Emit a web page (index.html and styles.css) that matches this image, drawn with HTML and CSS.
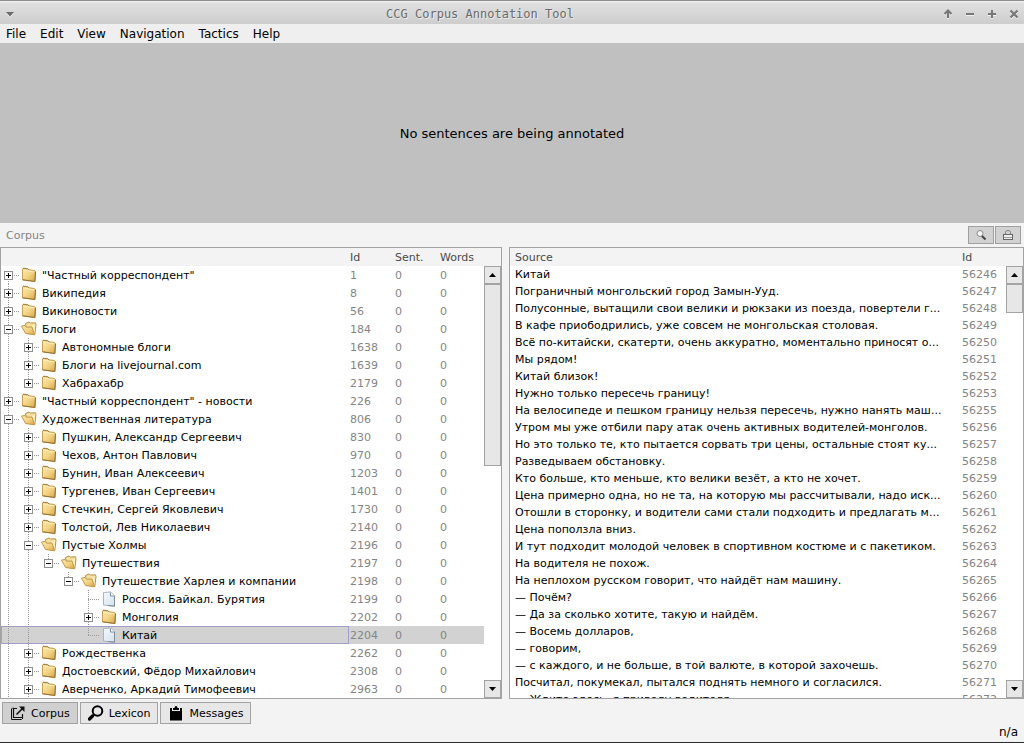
FILE: index.html
```html
<!DOCTYPE html>
<html lang="ru">
<head>
<meta charset="utf-8">
<title>CCG Corpus Annotation Tool</title>
<link rel="stylesheet" href="styles.css">
</head>
<body>
<svg class="sprites" aria-hidden="true">
  <defs>
    <linearGradient id="gold" x1="0" y1="0" x2="1" y2="1"><stop offset="0" stop-color="#fdeab0"/><stop offset="0.5" stop-color="#f3d486"/><stop offset="1" stop-color="#d9a545"/></linearGradient>
    <linearGradient id="paper" x1="0" y1="0" x2="1" y2="1"><stop offset="0" stop-color="#f4f9fd"/><stop offset="1" stop-color="#d3e2f0"/></linearGradient>
    <symbol id="folder" viewBox="0 0 16 16">
      <path d="M1.500 2 L2.500 1.200 L6.500 1.500 L8 2.800 L13.500 3.500 L14.500 4.500 L14 14.500 L1.500 12.800Z" fill="url(#gold)" stroke="#c9a052"/>
      <path d="M2.500 3 L7 3.500 L8 4.300 L13 4.800" fill="none" stroke="#fdf0c4"/>
      <path d="M1.500 12.800 L13.800 14.500 L14.500 4.800" fill="none" stroke="#93702f"/>
      <path d="M2 1.500 L6.500 1.800 L8 2.800" fill="none" stroke="#a5803c"/>
    </symbol>
    <symbol id="folder-open" viewBox="0 0 16 16">
      <path d="M4.500 2.500 L8 1 L9.500 2 L14.500 1.800 L15 3.500 L13.800 13.500 L6 12Z" fill="#f6df9c" stroke="#b8914a"/>
      <path d="M10.500 5 L14 3.500 L13.500 12" fill="#fbeebd" stroke="none"/>
      <path d="M0.500 5 L4 4.500 L5.500 6.200 L11 6 L13.500 13.800 L4.500 12.500Z" fill="url(#gold)" stroke="#c29a4d"/>
    </symbol>
    <symbol id="page" viewBox="0 0 16 16">
      <path d="M2.500 1.500 L9.500 1 L13.500 4.500 V15.200 L2.500 14Z" fill="url(#paper)" stroke="#a9b4bf"/>
      <path d="M9.500 1.500 V5 H13.500" fill="#ffffff" stroke="#7f8f9f"/>
      <path d="M13.500 5 V15.200 L7 14.500" fill="none" stroke="#7f8c99"/>
    </symbol>
  </defs>
</svg>

<header class="titlebar">
  <button class="wm" aria-label="Window menu"><svg width="10" height="7" viewBox="0 0 10 7"><path d="M1 1 H9 L5 5.500Z" fill="#6b6b6b"/></svg></button>
  <h1 class="title">CCG Corpus Annotation Tool</h1>
  <div class="wm-group">
    <button class="wm" aria-label="Shade"><svg width="10" height="10" viewBox="0 0 10 10"><path d="M5 9 V2 M1.500 5 L5 1.500 L8.500 5" fill="none" stroke="#777" stroke-width="2"/></svg></button>
    <button class="wm" aria-label="Minimize"><svg width="10" height="10" viewBox="0 0 10 10"><path d="M1 5 H9" stroke="#777" stroke-width="2"/></svg></button>
    <button class="wm" aria-label="Maximize"><svg width="10" height="10" viewBox="0 0 10 10"><path d="M1 5 H9 M5 1 V9" stroke="#777" stroke-width="2"/></svg></button>
    <button class="wm" aria-label="Close"><svg width="10" height="10" viewBox="0 0 10 10"><path d="M1.500 1.500 L8.500 8.500 M8.500 1.500 L1.500 8.500" stroke="#777" stroke-width="2.200"/></svg></button>
  </div>
</header>

<nav class="menubar">
  <button>File</button><button>Edit</button><button>View</button><button>Navigation</button><button>Tactics</button><button>Help</button>
</nav>

<section class="stage"><p>No sentences are being annotated</p></section>

<div class="dock-head">
  <h2>Corpus</h2>
  <div class="dock-tools">
    <button aria-label="Search"><svg width="12" height="12" viewBox="0 0 12 12"><circle cx="5" cy="4.500" r="3" fill="#f6f6f6" stroke="#888"/><path d="M7 7 L10.500 10.500" stroke="#444" stroke-width="2"/></svg></button>
    <button aria-label="Lock"><svg width="12" height="12" viewBox="0 0 12 12"><path d="M3.500 6 V3 Q3.500 1.500 6 1.500 T8.500 3 V6" fill="none" stroke="#888"/><rect x="1.500" y="5.500" width="9" height="5" fill="#eee" stroke="#666"/><path d="M2 8.500 H10" stroke="#999"/></svg></button>
  </div>
</div>

<main class="panels">
  <section class="panel tree-panel">
    <div class="view">
      <table class="tree">
        <colgroup><col><col class="c-id"><col class="c-id"><col class="c-words"></colgroup>
        <thead><tr><th></th><th>Id</th><th>Sent.</th><th>Words</th></tr></thead>
        <tbody>
          <tr><td><div class="item"><span class="node first"><button class="plus" aria-label="Expand"></button></span><svg><use href="#folder"/></svg>"Частный корреспондент"</div></td><td>1</td><td>0</td><td>0</td></tr>
          <tr><td><div class="item"><span class="node"><button class="plus" aria-label="Expand"></button></span><svg><use href="#folder"/></svg>Википедия</div></td><td>8</td><td>0</td><td>0</td></tr>
          <tr><td><div class="item"><span class="node"><button class="plus" aria-label="Expand"></button></span><svg><use href="#folder"/></svg>Викиновости</div></td><td>56</td><td>0</td><td>0</td></tr>
          <tr><td><div class="item"><span class="node"><button class="minus" aria-label="Collapse"></button></span><svg><use href="#folder-open"/></svg>Блоги</div></td><td>184</td><td>0</td><td>0</td></tr>
          <tr><td><div class="item"><i class="line"></i><span class="node"><button class="plus" aria-label="Expand"></button></span><svg><use href="#folder"/></svg>Автономные блоги</div></td><td>1638</td><td>0</td><td>0</td></tr>
          <tr><td><div class="item"><i class="line"></i><span class="node"><button class="plus" aria-label="Expand"></button></span><svg><use href="#folder"/></svg>Блоги на livejournal.com</div></td><td>1639</td><td>0</td><td>0</td></tr>
          <tr><td><div class="item"><i class="line"></i><span class="node last"><button class="plus" aria-label="Expand"></button></span><svg><use href="#folder"/></svg>Хабрахабр</div></td><td>2179</td><td>0</td><td>0</td></tr>
          <tr><td><div class="item"><span class="node"><button class="plus" aria-label="Expand"></button></span><svg><use href="#folder"/></svg>"Частный корреспондент" - новости</div></td><td>226</td><td>0</td><td>0</td></tr>
          <tr><td><div class="item"><span class="node"><button class="minus" aria-label="Collapse"></button></span><svg><use href="#folder-open"/></svg>Художественная литература</div></td><td>806</td><td>0</td><td>0</td></tr>
          <tr><td><div class="item"><i class="line"></i><span class="node"><button class="plus" aria-label="Expand"></button></span><svg><use href="#folder"/></svg>Пушкин, Александр Сергеевич</div></td><td>830</td><td>0</td><td>0</td></tr>
          <tr><td><div class="item"><i class="line"></i><span class="node"><button class="plus" aria-label="Expand"></button></span><svg><use href="#folder"/></svg>Чехов, Антон Павлович</div></td><td>970</td><td>0</td><td>0</td></tr>
          <tr><td><div class="item"><i class="line"></i><span class="node"><button class="plus" aria-label="Expand"></button></span><svg><use href="#folder"/></svg>Бунин, Иван Алексеевич</div></td><td>1203</td><td>0</td><td>0</td></tr>
          <tr><td><div class="item"><i class="line"></i><span class="node"><button class="plus" aria-label="Expand"></button></span><svg><use href="#folder"/></svg>Тургенев, Иван Сергеевич</div></td><td>1401</td><td>0</td><td>0</td></tr>
          <tr><td><div class="item"><i class="line"></i><span class="node"><button class="plus" aria-label="Expand"></button></span><svg><use href="#folder"/></svg>Стечкин, Сергей Яковлевич</div></td><td>1730</td><td>0</td><td>0</td></tr>
          <tr><td><div class="item"><i class="line"></i><span class="node"><button class="plus" aria-label="Expand"></button></span><svg><use href="#folder"/></svg>Толстой, Лев Николаевич</div></td><td>2140</td><td>0</td><td>0</td></tr>
          <tr><td><div class="item"><i class="line"></i><span class="node"><button class="minus" aria-label="Collapse"></button></span><svg><use href="#folder-open"/></svg>Пустые Холмы</div></td><td>2196</td><td>0</td><td>0</td></tr>
          <tr><td><div class="item"><i class="line"></i><i class="line"></i><span class="node last"><button class="minus" aria-label="Collapse"></button></span><svg><use href="#folder-open"/></svg>Путешествия</div></td><td>2197</td><td>0</td><td>0</td></tr>
          <tr><td><div class="item"><i class="line"></i><i class="line"></i><i class="gap"></i><span class="node last"><button class="minus" aria-label="Collapse"></button></span><svg><use href="#folder-open"/></svg>Путешествие Харлея и компании</div></td><td>2198</td><td>0</td><td>0</td></tr>
          <tr><td><div class="item"><i class="line"></i><i class="line"></i><i class="gap"></i><i class="gap"></i><span class="node"></span><svg><use href="#page"/></svg>Россия. Байкал. Бурятия</div></td><td>2199</td><td>0</td><td>0</td></tr>
          <tr><td><div class="item"><i class="line"></i><i class="line"></i><i class="gap"></i><i class="gap"></i><span class="node"><button class="plus" aria-label="Expand"></button></span><svg><use href="#folder"/></svg>Монголия</div></td><td>2202</td><td>0</td><td>0</td></tr>
          <tr class="selected"><td><div class="item"><i class="line"></i><i class="line"></i><i class="gap"></i><i class="gap"></i><span class="node last"></span><svg><use href="#page"/></svg>Китай</div></td><td>2204</td><td>0</td><td>0</td></tr>
          <tr><td><div class="item"><i class="line"></i><span class="node"><button class="plus" aria-label="Expand"></button></span><svg><use href="#folder"/></svg>Рождественка</div></td><td>2262</td><td>0</td><td>0</td></tr>
          <tr><td><div class="item"><i class="line"></i><span class="node"><button class="plus" aria-label="Expand"></button></span><svg><use href="#folder"/></svg>Достоевский, Фёдор Михайлович</div></td><td>2308</td><td>0</td><td>0</td></tr>
          <tr><td><div class="item"><i class="line"></i><span class="node"><button class="plus" aria-label="Expand"></button></span><svg><use href="#folder"/></svg>Аверченко, Аркадий Тимофеевич</div></td><td>2963</td><td>0</td><td>0</td></tr>
        </tbody>
      </table>
    </div>
    <div class="scrollbar">
      <button aria-label="Scroll up"><svg width="7" height="4" viewBox="0 0 7 4"><path d="M0 4 L3.500 0 L7 4Z"/></svg></button>
      <div class="track"><div class="thumb tree-thumb"></div></div>
      <button aria-label="Scroll down"><svg width="7" height="4" viewBox="0 0 7 4"><path d="M0 0 H7 L3.500 4Z"/></svg></button>
    </div>
  </section>

  <section class="panel source-panel">
    <div class="view">
      <table class="source">
        <colgroup><col><col class="c-id"></colgroup>
        <thead><tr><th>Source</th><th>Id</th></tr></thead>
        <tbody>
          <tr><td>Китай</td><td>56246</td></tr>
          <tr><td>Пограничный монгольский город Замын-Ууд.</td><td>56247</td></tr>
          <tr><td>Полусонные, вытащили свои велики и рюкзаки из поезда, повертели г...</td><td>56248</td></tr>
          <tr><td>В кафе приободрились, уже совсем не монгольская столовая.</td><td>56249</td></tr>
          <tr><td>Всё по-китайски, скатерти, очень аккуратно, моментально приносят о...</td><td>56250</td></tr>
          <tr><td>Мы рядом!</td><td>56251</td></tr>
          <tr><td>Китай близок!</td><td>56252</td></tr>
          <tr><td>Нужно только пересечь границу!</td><td>56253</td></tr>
          <tr><td>На велосипеде и пешком границу нельзя пересечь, нужно нанять маш...</td><td>56255</td></tr>
          <tr><td>Утром мы уже отбили пару атак очень активных водителей-монголов.</td><td>56256</td></tr>
          <tr><td>Но это только те, кто пытается сорвать три цены, остальные стоят ку...</td><td>56257</td></tr>
          <tr><td>Разведываем обстановку.</td><td>56258</td></tr>
          <tr><td>Кто больше, кто меньше, кто велики везёт, а кто не хочет.</td><td>56259</td></tr>
          <tr><td>Цена примерно одна, но не та, на которую мы рассчитывали, надо иск...</td><td>56260</td></tr>
          <tr><td>Отошли в сторонку, и водители сами стали подходить и предлагать м...</td><td>56261</td></tr>
          <tr><td>Цена поползла вниз.</td><td>56262</td></tr>
          <tr><td>И тут подходит молодой человек в спортивном костюме и с пакетиком.</td><td>56263</td></tr>
          <tr><td>На водителя не похож.</td><td>56264</td></tr>
          <tr><td>На неплохом русском говорит, что найдёт нам машину.</td><td>56265</td></tr>
          <tr><td>— Почём?</td><td>56266</td></tr>
          <tr><td>— Да за сколько хотите, такую и найдём.</td><td>56267</td></tr>
          <tr><td>— Восемь долларов,</td><td>56268</td></tr>
          <tr><td>— говорим,</td><td>56269</td></tr>
          <tr><td>— с каждого, и не больше, в той валюте, в которой захочешь.</td><td>56270</td></tr>
          <tr><td>Посчитал, покумекал, пытался поднять немного и согласился.</td><td>56271</td></tr>
          <tr><td>— Ждите здесь, я приведу водителя.</td><td>56272</td></tr>
        </tbody>
      </table>
    </div>
    <div class="scrollbar">
      <button aria-label="Scroll up"><svg width="7" height="4" viewBox="0 0 7 4"><path d="M0 4 L3.500 0 L7 4Z"/></svg></button>
      <div class="track"><div class="thumb source-thumb"></div></div>
      <button aria-label="Scroll down"><svg width="7" height="4" viewBox="0 0 7 4"><path d="M0 0 H7 L3.500 4Z"/></svg></button>
    </div>
  </section>
</main>

<nav class="tabs">
  <button class="active"><svg width="16" height="16" viewBox="0 0 16 16" fill="none" stroke="#111"><path d="M7 3.500 H3.500 V12.500 H12.500 V9" stroke-width="1.200"/><path d="M3 2.500 L1.500 4 V14.500 H11.500 L13 13" /><path d="M6.500 9.500 L13 3" stroke-width="1.600"/><path d="M9 1.500 H14.500 V7Z" fill="#111" stroke="none"/></svg>Corpus</button>
  <button><svg width="16" height="16" viewBox="0 0 16 16" fill="none" stroke="#000"><circle cx="9.500" cy="6" r="4.800" stroke-width="2"/><path d="M6 9.500 L4 11.500" stroke-width="2"/><path d="M4.500 11 L1.500 14" stroke-width="3.200" stroke-linecap="round"/></svg>Lexicon</button>
  <button><svg width="16" height="16" viewBox="0 0 16 16"><path d="M2 3 H4 V6 H12 V3 H14 V15.500 H2Z"/><path d="M5 5 V3 H6.500 Q6.500 1 8 1 T9.500 3 H11 V5Z"/></svg>Messages</button>
</nav>

<footer class="status">n/a</footer>
</body>
</html>
```

FILE: styles.css
```css
* { box-sizing: border-box; }

body {
  margin: 0;
  height: 100vh;
  display: flex;
  flex-direction: column;
  overflow: hidden;
  background: #f3f3f3;
  border-bottom: 1px solid #2c2c2c;
  color: #000;
  font: 11px/17px "DejaVu Sans", sans-serif;
}

button {
  margin: 0;
  padding: 0;
  border: 0;
  background: none;
  color: inherit;
  font: inherit;
}

h1, h2, p { margin: 0; font-weight: normal; }
svg { display: block; flex: none; }
.sprites { position: absolute; width: 0; height: 0; }

.titlebar {
  display: flex;
  align-items: center;
  height: 24px;
  flex: none;
  padding: 3px 5px 0;
  border-top: 1px solid #8f8f8f;
  background: linear-gradient(#f4f4f4, #e0e0e0 2px, #cdcdcd);
}
.titlebar .title {
  flex: 1;
  padding-left: 2px;
  text-align: center;
  font: 12px/20px "DejaVu Sans Mono", monospace;
  color: #6b6b6b;
  text-shadow: 1px 1px 0 #ececec;
}
.wm-group { display: flex; gap: 12px; }
.wm svg { filter: drop-shadow(0 1px 0 #f0f0f0); }

.menubar {
  display: flex;
  gap: 14px;
  flex: none;
  height: 19px;
  padding: 1px 6px 0;
  background: #efefef;
  font-size: 12px;
  line-height: 18px;
}

.stage {
  display: flex;
  align-items: center;
  justify-content: center;
  flex: 0 0 180px;
  background: #c0c0c0;
  font-size: 13px;
}

.dock-head {
  display: flex;
  align-items: center;
  justify-content: space-between;
  flex: 0 0 24px;
  padding: 0 3px 0 6px;
}
.dock-head h2 { font-size: 11px; color: #858585; }
.dock-tools { display: flex; gap: 1px; }
.dock-tools button {
  display: flex;
  align-items: center;
  justify-content: center;
  width: 26px;
  height: 18px;
  border: 1px solid #a0a0a0;
  background: #d2d2d2;
}

.panels {
  display: grid;
  grid-template-columns: 502fr 515fr;
  gap: 7px;
  flex: 1;
  min-height: 0;
}
.panel {
  display: flex;
  min-width: 0;
  min-height: 0;
  border: 1px solid #a3a3a3;
}
.view { flex: 1; min-width: 0; overflow: hidden; background: #fff; }

table { width: 100%; table-layout: fixed; border-collapse: collapse; }
th, td { padding: 0; text-align: left; font-weight: normal; white-space: nowrap; overflow: hidden; }
th { height: 18px; background: #f3f3f3; color: #4a4a4a; }
td + td { color: #858585; }

.tree td { height: 18px; }
.tree .c-id { width: 45px; }
.tree .c-words { width: 45px; }
.tree th + th, .tree td + td { padding-left: 1px; }
.tree .item {
  display: flex;
  align-items: center;
  height: 18px;
}
.item svg { width: 16px; height: 16px; margin-right: 5px; }
.selected td { background: #d2d2d2; }
.selected td:first-child { box-shadow: inset 0 0 0 1px #a19fca; }

.line, .gap, .node { flex: none; width: 20px; height: 18px; }
.line {
  background: repeating-linear-gradient(#999 0 1px, transparent 1px 2px) 7px 0 / 1px 100% no-repeat;
}
.node {
  padding: 5px 0 0 3px;
  background:
    repeating-linear-gradient(#999 0 1px, transparent 1px 2px) 7px 0 / 1px 18px no-repeat,
    repeating-linear-gradient(90deg, #999 0 1px, transparent 1px 2px) 7px 9px / 12px 1px no-repeat;
}
.node.last { background-size: 1px 9px, 12px 1px; }
.node.first { background-position: 7px 9px, 7px 9px; }
.plus, .minus {
  display: block;
  width: 9px;
  height: 9px;
  border: 1px solid #8f8f8f;
}
.plus {
  background:
    linear-gradient(#000, #000) center / 5px 1px no-repeat,
    linear-gradient(#000, #000) center / 1px 5px no-repeat,
    #fff;
}
.minus { background: linear-gradient(#000, #000) center / 5px 1px no-repeat, #fff; }

.source td { height: 17px; }
.source th:first-child, .source td:first-child { padding-left: 5px; }
.source .c-id { width: 44px; }

.scrollbar {
  display: flex;
  flex-direction: column;
  flex: none;
  width: 17px;
  padding-top: 18px;
}
.scrollbar button {
  display: flex;
  align-items: center;
  justify-content: center;
  height: 18px;
  border: 1px solid #a3a3a3;
  background: #e7e7e7;
}
.track { flex: 1; background: #fff; }
.thumb { border: 1px solid #a3a3a3; background: #e7e7e7; }
.tree-thumb { height: 46%; }
.source-thumb { height: 29px; }

.tabs {
  display: flex;
  gap: 2px;
  flex: none;
  padding: 3px 2px 0;
}
.tabs button {
  display: flex;
  align-items: center;
  gap: 5px;
  height: 22px;
  padding: 0 7px;
  border: 1px solid #a3a3a3;
  background: #e7e7e7;
}
.tabs .active { background: #d0d0d0; }

.status {
  flex: none;
  padding: 0 6px 1px;
  font-size: 12px;
  text-align: right;
}
```
